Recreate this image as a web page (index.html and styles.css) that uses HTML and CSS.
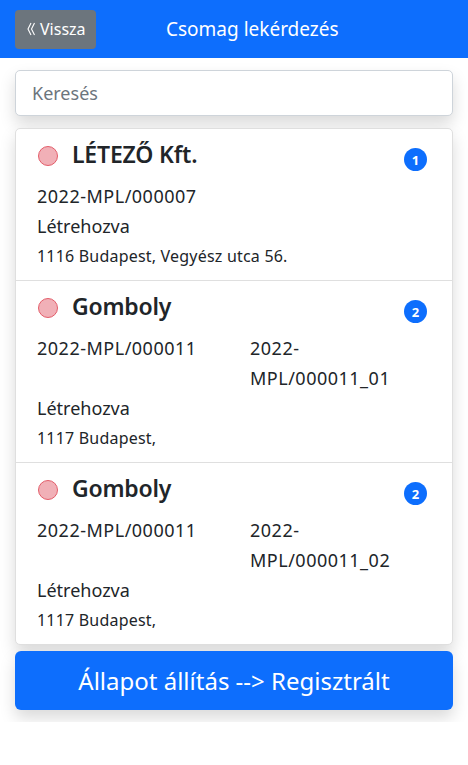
FILE: index.html
```html
<!DOCTYPE html>
<html lang="hu">

<head>
    <meta charset="UTF-8">
    <meta name="viewport" content="width=device-width, initial-scale=1.0">
    <title>Csomag lekérdezés</title>
    <link rel="stylesheet" href="styles.css">
</head>

<body>
    <div class="fejlec">
        <button class="botao-vissza">
            <svg class="dupla-nyil" width="8" height="14" viewBox="0 0 8 14">
                <path d="M4 1 L1 7 L4 13 M7.5 1 L4.5 7 L7.5 13" fill="none" stroke="#fff" stroke-width="1.1" />
            </svg>
            Vissza
        </button>
        <div class="cim">Csomag lekérdezés</div>
    </div>

    <div class="tartalom">
        <input type="text" class="kereses" placeholder="Keresés">

        <ul class="lista">
            <li class="elem">
                <div class="elem-fej">
                    <span class="statusz"></span>
                    <h4 class="nev">LÉTEZŐ Kft.</h4>
                    <span class="jelveny">1</span>
                </div>
                <div class="sorok">
                    <div>2022-MPL/000007</div>
                </div>
                <div class="allapot">Létrehozva</div>
                <div class="cim-sor">1116 Budapest, Vegyész utca 56.</div>
            </li>
            <li class="elem">
                <div class="elem-fej">
                    <span class="statusz"></span>
                    <h4 class="nev">Gomboly</h4>
                    <span class="jelveny">2</span>
                </div>
                <div class="sorok">
                    <div>2022-MPL/000011</div>
                    <div>2022-<br>MPL/000011_01</div>
                </div>
                <div class="allapot">Létrehozva</div>
                <div class="cim-sor">1117 Budapest,</div>
            </li>
            <li class="elem">
                <div class="elem-fej">
                    <span class="statusz"></span>
                    <h4 class="nev">Gomboly</h4>
                    <span class="jelveny">2</span>
                </div>
                <div class="sorok">
                    <div>2022-MPL/000011</div>
                    <div>2022-<br>MPL/000011_02</div>
                </div>
                <div class="allapot">Létrehozva</div>
                <div class="cim-sor">1117 Budapest,</div>
            </li>
        </ul>

        <button class="botao-allapot">Állapot állítás --&gt; Regisztrált</button>
    </div>
</body>

</html>
```

FILE: styles.css
```css
body {
    margin: 0;
    font-family: "Noto Sans", "Open Sans", sans-serif;
    color: #212529;
    background-color: #fff;
}

.fejlec {
    display: flex;
    align-items: center;
    height: 58px;
    padding: 0 15px;
    background-color: #0d6efd;
}

.botao-vissza {
    display: flex;
    align-items: center;
    gap: 5px;
    height: 39px;
    padding: 0 10px 0 12px;
    border: none;
    border-radius: 4px;
    background-color: #6c757d;
    color: #fff;
    font-family: inherit;
    font-size: 16px;
}

.cim {
    flex: 1;
    padding-right: 44px;
    text-align: center;
    color: #fff;
    font-size: 19px;
}

.tartalom {
    padding: 12px 15px;
}

.kereses {
    display: block;
    width: 100%;
    height: 46px;
    padding: 0 16px;
    box-sizing: border-box;
    border: 1px solid #ced4da;
    border-radius: 5px;
    font-family: inherit;
    font-size: 18px;
    color: #212529;
    box-shadow: 0 8px 16px rgba(0, 0, 0, 0.15);
}

.kereses::placeholder {
    color: #6c757d;
}

.lista {
    list-style: none;
    margin: 12px 0 0 0;
    padding: 0;
    border: 1px solid #dfdfdf;
    border-radius: 5px;
    box-shadow: 0 8px 16px rgba(0, 0, 0, 0.15);
    background-color: #fff;
}

.elem {
    padding: 11px 21px 9px 21px;
}

.elem:not(:last-child) {
    border-bottom: 1px solid #dfdfdf;
}

.elem-fej {
    display: flex;
    align-items: flex-start;
    height: 29px;
}

.statusz {
    width: 18px;
    height: 18px;
    margin: 6px 0 0 1px;
    border: 1px solid #e35d6a;
    border-radius: 50%;
    background-color: #f1b0b7;
}

.nev {
    flex: 1;
    margin: 0 0 0 14px;
    font-size: 23px;
    font-weight: 600;
    line-height: 29px;
    letter-spacing: -0.2px;
}

.jelveny {
    display: flex;
    align-items: center;
    justify-content: center;
    width: 23px;
    height: 23px;
    margin: 8px 4px 0 0;
    border-radius: 50%;
    background-color: #0d6efd;
    color: #fff;
    font-size: 13px;
    font-weight: 700;
}

.sorok {
    display: grid;
    grid-template-columns: 213px 1fr;
    margin-top: 12px;
    font-size: 18px;
    line-height: 30px;
    letter-spacing: 0.5px;
}

.allapot {
    font-size: 18px;
    line-height: 30px;
}

.cim-sor {
    font-size: 16px;
    line-height: 30px;
    letter-spacing: 0.2px;
}

.botao-allapot {
    display: block;
    width: 100%;
    height: 59px;
    margin-top: 6px;
    border: none;
    border-radius: 6px;
    background-color: #0d6efd;
    color: #fff;
    font-family: inherit;
    font-size: 24px;
    box-shadow: 0 8px 16px rgba(0, 0, 0, 0.15);
}
```
